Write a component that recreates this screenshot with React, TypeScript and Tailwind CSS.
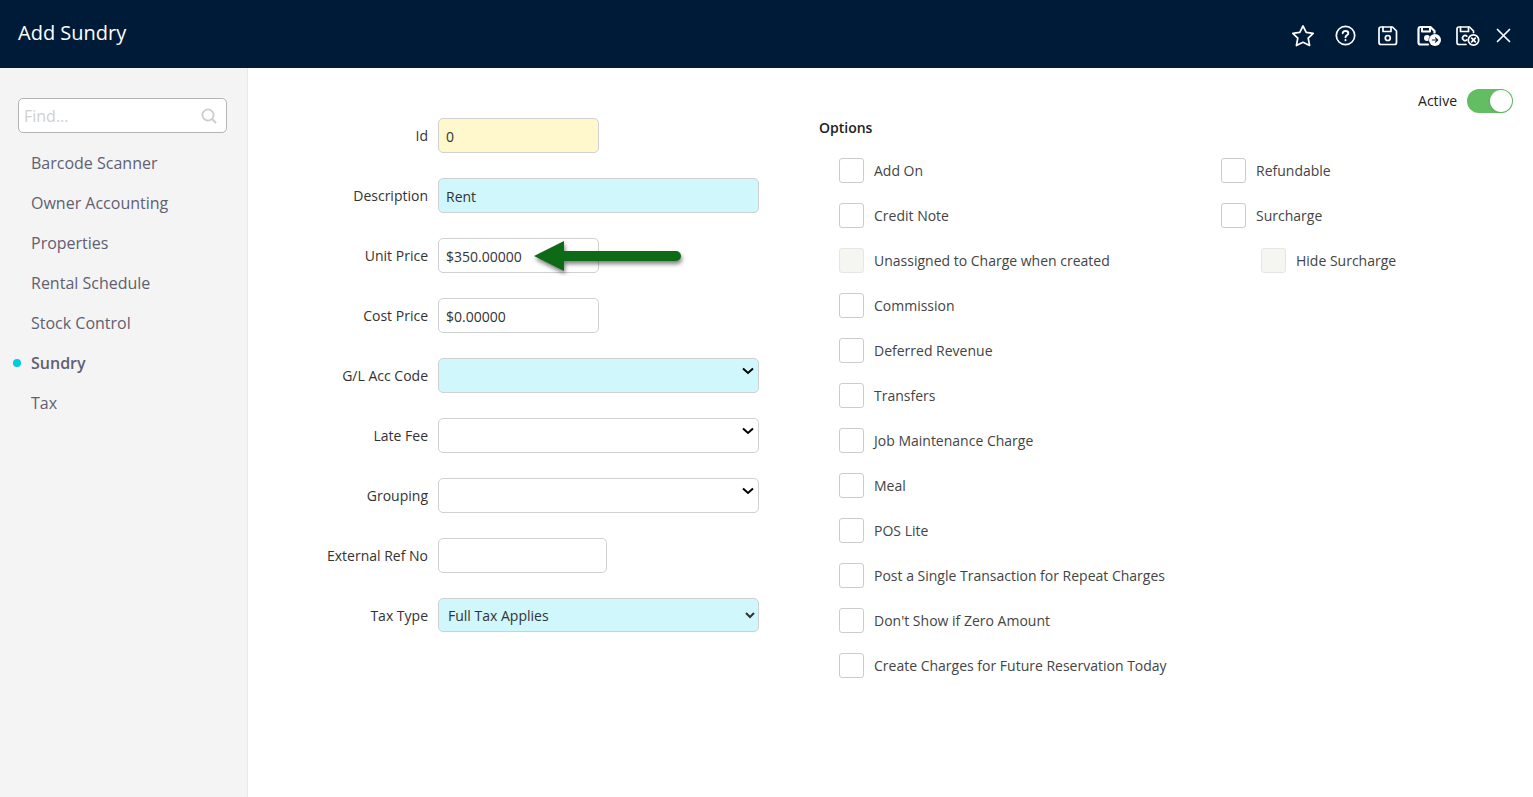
import type { ReactNode } from "react";

const menu = [
  "Barcode Scanner",
  "Owner Accounting",
  "Properties",
  "Rental Schedule",
  "Stock Control",
  "Sundry",
  "Tax",
];

type Option = { label: string; disabled?: boolean; nested?: boolean };

const mainOptions: Option[] = [
  { label: "Add On" },
  { label: "Credit Note" },
  { label: "Unassigned to Charge when created", disabled: true },
  { label: "Commission" },
  { label: "Deferred Revenue" },
  { label: "Transfers" },
  { label: "Job Maintenance Charge" },
  { label: "Meal" },
  { label: "POS Lite" },
  { label: "Post a Single Transaction for Repeat Charges" },
  { label: "Don't Show if Zero Amount" },
  { label: "Create Charges for Future Reservation Today" },
];

const sideOptions: Option[] = [
  { label: "Refundable" },
  { label: "Surcharge" },
  { label: "Hide Surcharge", disabled: true, nested: true },
];

function IconButton({ label, children }: { label: string; children: ReactNode }) {
  return (
    <button type="button" aria-label={label} className="h-6 w-6 cursor-pointer text-white">
      <svg
        viewBox="0 0 24 24"
        className="h-6 w-6 overflow-visible"
        fill="none"
        stroke="currentColor"
        strokeWidth="1.7"
        strokeLinecap="round"
        strokeLinejoin="round"
      >
        {children}
      </svg>
    </button>
  );
}

function Header() {
  return (
    <header className="flex h-17 items-center justify-between bg-[#001b38] px-[18px]">
      <h1 className="pb-[2px] text-xl text-white">Add Sundry</h1>
      <div className="flex items-center gap-4 pt-1">
        <div className="flex gap-[18px]">
          <IconButton label="Add to favourites">
            <path d="M12 2l3.2 6.3 7 1-5 4.9 1.4 7.3-6.600-3.200-6.600 3.200 1.400-7.300-5-4.900 7-1z" />
          </IconButton>
          <IconButton label="Help">
            <circle cx="12.5" cy="11.5" r="9.2" />
            <path d="M9.7 9.2c.2-1.5 1.300-2.200 2.800-2.200s2.800.8 2.800 2.200c0 2-2.800 2-2.800 4" strokeWidth="1.9" />
            <path d="M12.5 16v.2" strokeWidth="2" />
          </IconButton>
          <IconButton label="Save">
            <path d="M6 3h11.5l4 4v11.5a2 2 0 0 1-2 2H6a2 2 0 0 1-2-2V5a2 2 0 0 1 2-2z" />
            <path d="M8 3v4.5h8V3" />
            <circle cx="12.8" cy="14" r="2.5" />
          </IconButton>
        </div>
        <div className="flex gap-[14px]">
          <IconButton label="Save and continue">
            <path d="M13 20.5H5.5a2 2 0 0 1-2-2V5a2 2 0 0 1 2-2h10L19.5 7v2" strokeWidth="2.2" />
            <path d="M7 3v4.5h8V3" strokeWidth="2" />
            <circle cx="12" cy="14" r="3" fill="currentColor" stroke="none" />
            <circle cx="20" cy="16" r="6.4" fill="#001b38" stroke="none" />
            <circle cx="20" cy="16" r="6" fill="currentColor" stroke="none" />
            <path d="M17.3 16h5.2M20.5 13.8l2.2 2.2-2.2 2.2" stroke="#001b38" strokeWidth="1.1" />
          </IconButton>
          <IconButton label="Save and close">
            <path d="M13 20.5H6a2 2 0 0 1-2-2V5a2 2 0 0 1 2-2h10.5l4 4v1.5" />
            <path d="M7.5 3v4.5h8V3" />
            <path d="M13.8 12.2a2.5 2.5 0 1 0 0 3.6" />
            <circle cx="20.5" cy="16" r="5.2" />
            <path d="M18.7 14.2l3.6 3.6M22.3 14.2l-3.6 3.6" />
          </IconButton>
          <IconButton label="Close">
            <path d="M6.5 5.5l12 12M18.5 5.5l-12 12" />
          </IconButton>
        </div>
      </div>
    </header>
  );
}

function Sidebar() {
  return (
    <aside className="w-62 shrink-0 border-r border-[#e8e8e8] bg-[#f4f4f4] pt-[30px]">
      <div className="mr-5 ml-[18px] flex h-[35px] items-center rounded-[5px] border border-[#b4b4b4] bg-white pr-2 pl-[5px]">
        <input
          type="search"
          aria-label="Find"
          placeholder="Find..."
          className="min-w-0 flex-1 text-base outline-none placeholder:text-[#d0d0d0]"
        />
        <svg viewBox="0 0 18 18" className="h-[18px] w-[18px]" fill="none" stroke="#cccccc" strokeWidth="1.8">
          <circle cx="8" cy="8" r="5.6" />
          <path d="M12 12l4 4" strokeWidth="2" />
        </svg>
      </div>
      <nav className="mt-[10px] flex flex-col">
        {menu.map((item) => (
          <a key={item} href="#" className="flex h-10 items-center pl-[13px] text-base text-[#5f6072]">
            <span className={item === "Sundry" ? "mr-[10px] h-2 w-2 rounded-full bg-[#00cbdc]" : "mr-[10px] h-2 w-2"} />
            <span className={item === "Sundry" ? "font-semibold" : ""}>{item}</span>
          </a>
        ))}
      </nav>
    </aside>
  );
}

function Field({ id, label, children }: { id: string; label: string; children: ReactNode }) {
  return (
    <div className="flex h-[35px] items-center">
      <label htmlFor={id} className="mr-[10px] w-45 shrink-0 text-right text-[#333333]">
        {label}
      </label>
      {children}
    </div>
  );
}

const box = "h-[35px] rounded-[5px] border border-[#d0d0d0] text-[#333333]";

function Arrow() {
  return (
    <svg viewBox="0 0 160 46" className="pointer-events-none absolute -top-2 left-[90px] h-[46px] w-[160px]">
      <path
        d="M6 26L36 11v10h112a5 5 0 0 1 0 10H36v10z"
        fill="#0d6b18"
        className="drop-shadow-[1px_3px_2px_rgba(0,0,0,0.5)]"
      />
    </svg>
  );
}

function EmptySelect({ id, color }: { id: string; color: string }) {
  return (
    <div className="relative flex-1">
      <select id={id} className={`${box} ${color} block w-full appearance-none px-2`} />
      <svg
        viewBox="0 0 12 8"
        className="pointer-events-none absolute top-[9px] right-[5px] h-2 w-3"
        fill="none"
        stroke="#000000"
        strokeWidth="2"
      >
        <path d="M1 1.5l5 4.5 5-4.5" />
      </svg>
    </div>
  );
}

function Details() {
  return (
    <div className="flex w-[511px] shrink-0 flex-col gap-[25px]">
      <Field id="id" label="Id">
        <input id="id" defaultValue="0" className={`${box} w-[161px] bg-[#fff8cd] px-[7px] pt-[2px]`} />
      </Field>
      <Field id="description" label="Description">
        <input id="description" defaultValue="Rent" className={`${box} min-w-0 flex-1 bg-[#cff7fc] px-[7px] pt-[2px]`} />
      </Field>
      <Field id="unit" label="Unit Price">
        <div className="relative">
          <input id="unit" defaultValue="$350.00000" className={`${box} w-[161px] bg-white px-[7px] pt-[2px]`} />
          <Arrow />
        </div>
      </Field>
      <Field id="cost" label="Cost Price">
        <input id="cost" defaultValue="$0.00000" className={`${box} w-[161px] bg-white px-[7px] pt-[2px]`} />
      </Field>
      <Field id="gl" label="G/L Acc Code">
        <EmptySelect id="gl" color="bg-[#cff7fc]" />
      </Field>
      <Field id="late" label="Late Fee">
        <EmptySelect id="late" color="bg-white" />
      </Field>
      <Field id="grouping" label="Grouping">
        <EmptySelect id="grouping" color="bg-white" />
      </Field>
      <Field id="external" label="External Ref No">
        <input id="external" className={`${box} w-[169px] bg-white px-[7px]`} />
      </Field>
      <Field id="tax" label="Tax Type">
        <select
          id="tax"
          className="h-[34px] min-w-0 flex-1 self-start rounded-[5px] border border-[#d0d0d0] bg-[#cff7fc] pl-[5px] text-[#333333]"
        >
          <option>Full Tax Applies</option>
        </select>
      </Field>
    </div>
  );
}

function OptionList({ options }: { options: Option[] }) {
  return (
    <div className="flex flex-col gap-5">
      {options.map((option) => (
        <label key={option.label} className={option.nested ? "ml-10 flex items-center" : "flex items-center"}>
          <input
            type="checkbox"
            disabled={option.disabled}
            className="mr-[10px] h-[25px] w-[25px] shrink-0 appearance-none rounded-[3px] border border-[#cccccc] bg-white checked:bg-[#67bf65] disabled:border-[#e6e6e2] disabled:bg-[#f5f6f1]"
          />
          <span className="text-[#444444]">{option.label}</span>
        </label>
      ))}
    </div>
  );
}

export default function App() {
  return (
    <div className="flex min-h-screen flex-col bg-white font-['Open_Sans',sans-serif] text-sm">
      <Header />
      <div className="flex flex-1">
        <Sidebar />
        <main className="min-w-0 flex-1 pt-5 pr-5">
          <label className="flex h-[26px] items-center justify-end gap-[10px] text-[#222222]">
            Active
            <input
              type="checkbox"
              role="switch"
              defaultChecked
              className="h-6 w-[46px] appearance-none rounded-full bg-[#cccccc] p-px before:block before:h-[22px] before:w-[22px] before:rounded-full before:bg-white before:shadow before:content-[''] checked:bg-[#63bd63] checked:before:ml-auto"
            />
          </label>
          <div className="mt-1 flex gap-15">
            <Details />
            <section className="min-w-0 flex-1">
              <h2 className="font-semibold text-[#222222]">Options</h2>
              <div className="mt-5 ml-5 grid grid-cols-[382px_1fr]">
                <OptionList options={mainOptions} />
                <OptionList options={sideOptions} />
              </div>
            </section>
          </div>
        </main>
      </div>
    </div>
  );
}
